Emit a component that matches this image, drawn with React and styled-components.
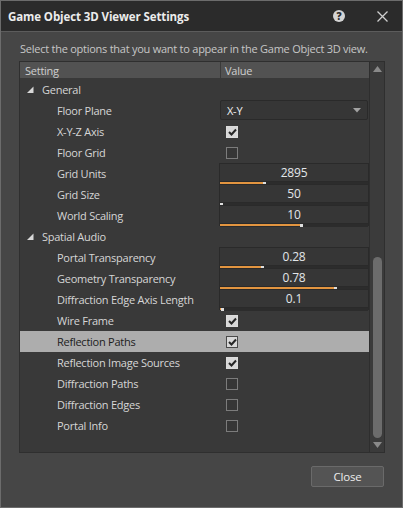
import React from "react";
import styled, { createGlobalStyle } from "styled-components";

const GlobalStyle = createGlobalStyle`
  html, body { margin: 0; padding: 0; background: #464646; }
  body { font-family: "Open Sans", "Noto Sans", sans-serif; }
  * { box-sizing: border-box; }
`;

const Window = styled.div`
  width: 403px;
  height: 508px;
  border: 1px solid #6c6c6c;
  background: #464646;
  display: flex;
  flex-direction: column;
`;

const TitleBar = styled.div`
  height: 31px;
  flex: none;
  background: #2b2b2b;
  border-bottom: 1px solid #5c5c5c;
  display: flex;
  align-items: center;
  padding: 0 0 0 7px;
`;

const Title = styled.div`
  flex: 1;
  color: #ececec;
  font-weight: 700;
  font-size: 11.5px;
  letter-spacing: -0.1px;
`;

const HelpIcon = styled.span`
  width: 12px;
  height: 12px;
  border-radius: 50%;
  background: #d4d4d4;
  color: #2b2b2b;
  font-size: 10px;
  font-weight: 800;
  line-height: 12px;
  text-align: center;
  margin-right: 32px;
`;

const CloseX = styled.svg`
  width: 11px;
  height: 11px;
  margin-right: 14px;
`;

const Body = styled.div`
  flex: 1;
  display: flex;
  flex-direction: column;
  padding: 9px 17px 0 18px;
`;

const Description = styled.div`
  color: #c6c6c6;
  font-size: 11px;
  letter-spacing: -0.25px;
  line-height: 16px;
  height: 20px;
  padding-left: 1px;
  white-space: nowrap;
`;

const Table = styled.div`
  width: 366px;
  height: 392px;
  border: 1px solid #2f2f2f;
  background: #393939;
  display: flex;
`;

const Content = styled.div`
  flex: 1;
  display: flex;
  flex-direction: column;
`;

const Header = styled.div`
  height: 16px;
  margin-bottom: 1px;
  background: #525252;
  color: #cfcfcf;
  font-size: 11px;
  letter-spacing: -0.25px;
  display: flex;
  align-items: center;
`;

const HeaderCell = styled.div`
  width: ${(p) => (p.$first ? "200px" : "auto")};
  flex: ${(p) => (p.$first ? "none" : 1)};
  padding-left: ${(p) => (p.$first ? 5 : 4)}px;
  border-left: ${(p) => (p.$first ? "none" : "1px solid #3a3a3a")};
  height: 100%;
  display: flex;
  align-items: center;
`;

const Row = styled.div`
  height: 21px;
  display: flex;
  background: ${(p) => (p.$selected ? "#adadad" : "transparent")};
  color: ${(p) => (p.$selected ? "#1c1c1c" : "#d6d6d6")};
  font-size: 11px;
  letter-spacing: -0.25px;
`;

const LabelCell = styled.div`
  width: 200px;
  flex: none;
  display: flex;
  align-items: center;
  gap: 8px;
  padding-left: ${(p) => (p.$group ? 6 : 37)}px;
  white-space: nowrap;
`;

const ValueCell = styled.div`
  flex: 1;
  display: flex;
  align-items: center;
  padding-left: ${(p) => p.$pad || 0}px;
`;

const Check = styled.div`
  width: 12px;
  height: 12px;
  border: 1px solid ${(p) => (p.$checked ? (p.$dark ? "#4a4a4a" : "#dcdcdc") : "#7c7c7c")};
  background: ${(p) => (p.$checked ? "#d8d8d8" : "#363636")};
  display: flex;
  align-items: center;
  justify-content: center;
`;

const Select = styled.div`
  flex: 1;
  height: 20px;
  margin-right: 1px;
  margin-top: -1px;
  border: 1px solid #2a2a2a;
  border-radius: 2px;
  background: #363636;
  color: #f0f0f0;
  display: flex;
  align-items: center;
  justify-content: space-between;
  padding: 0 6px 0 6px;
`;

const Slider = styled.div`
  flex: 1;
  height: 21px;
  margin-left: -1px;
  margin-top: -1px;
  border: 1px solid #2a2a2a;
  background: #363636;
  display: flex;
  flex-direction: column;
`;

const SliderValue = styled.div`
  flex: 1;
  display: flex;
  align-items: center;
  justify-content: center;
  color: #e2e6ea;
  font-size: 12px;
  letter-spacing: -0.2px;
`;

const Track = styled.div`
  height: 5px;
  background: #2c2c2c;
  border-top: 1px solid #2a2a2a;
  display: flex;
  align-items: center;
`;

const Fill = styled.div`
  height: 2px;
  background: #e39540;
`;

const Thumb = styled.div`
  width: 3px;
  height: 3px;
  background: #dedede;
`;

const ScrollBar = styled.div`
  width: 15px;
  flex: none;
  border-left: 1px solid #2e2e2e;
  background: #3b3b3b;
  display: flex;
  flex-direction: column;
  align-items: center;
  padding: 4px 0 4px 0;
`;

const ScrollThumb = styled.div`
  width: 9px;
  height: 181px;
  margin-top: auto;
  margin-bottom: 4px;
  border-radius: 5px;
  background: #6c6c6c;
`;

const Footer = styled.div`
  display: flex;
  justify-content: flex-end;
  padding-top: 13px;
  padding-right: 1px;
`;

const Button = styled.button`
  width: 73px;
  height: 21px;
  border: 1px solid #6a6a6a;
  border-radius: 2px;
  background: #545454;
  color: #ececec;
  font-family: "Open Sans", "Noto Sans", sans-serif;
  font-size: 11.5px;
  letter-spacing: -0.2px;
  padding: 0;
`;

const rows = [
  { group: true, label: "General" },
  { label: "Floor Plane", kind: "select", value: "X-Y" },
  { label: "X-Y-Z Axis", kind: "check", checked: true },
  { label: "Floor Grid", kind: "check", checked: false },
  { label: "Grid Units", kind: "slider", value: "2895", pct: 29 },
  { label: "Grid Size", kind: "slider", value: "50", pct: 0 },
  { label: "World Scaling", kind: "slider", value: "10", pct: 54 },
  { group: true, label: "Spatial Audio" },
  { label: "Portal Transparency", kind: "slider", value: "0.28", pct: 28 },
  { label: "Geometry Transparency", kind: "slider", value: "0.78", pct: 77 },
  { label: "Diffraction Edge Axis Length", kind: "slider", value: "0.1", pct: 0.7 },
  { label: "Wire Frame", kind: "check", checked: true },
  { label: "Reflection Paths", kind: "check", checked: true, selected: true },
  { label: "Reflection Image Sources", kind: "check", checked: true },
  { label: "Diffraction Paths", kind: "check", checked: false },
  { label: "Diffraction Edges", kind: "check", checked: false },
  { label: "Portal Info", kind: "check", checked: false },
];

const Tick = () => (
  <svg width="9" height="8" viewBox="0 0 9 8">
    <path d="M1 4 L3.5 6.5 L8 1.5" fill="none" stroke="#262626" strokeWidth="2" />
  </svg>
);

const Expander = () => (
  <svg width="8" height="8" viewBox="0 0 8 8">
    <polygon points="7.5,0.5 7.5,7 1,7" fill="#d8d8d8" />
  </svg>
);

function Value({ r }) {
  if (r.kind === "select")
    return (
      <ValueCell>
        <Select>
          <span>{r.value}</span>
          <svg width="8" height="5" viewBox="0 0 8 5">
            <polygon points="0,0 8,0 4,4.5" fill="#a2a2a2" />
          </svg>
        </Select>
      </ValueCell>
    );
  if (r.kind === "check")
    return (
      <ValueCell $pad={6}>
        <Check $checked={r.checked} $dark={r.selected}>
          {r.checked && <Tick />}
        </Check>
      </ValueCell>
    );
  if (r.kind === "slider")
    return (
      <ValueCell>
        <Slider>
          <SliderValue>{r.value}</SliderValue>
          <Track>
            <Fill style={{ width: `${r.pct}%` }} />
            <Thumb />
          </Track>
        </Slider>
      </ValueCell>
    );
  return <ValueCell />;
}

export default function App() {
  return (
    <>
      <GlobalStyle />
      <Window>
        <TitleBar>
          <Title>Game Object 3D Viewer Settings</Title>
          <HelpIcon>?</HelpIcon>
          <CloseX viewBox="0 0 11 11">
            <path d="M0.5 0.5 L10.5 10.5 M10.5 0.5 L0.5 10.5" stroke="#cfcfcf" strokeWidth="1.3" />
          </CloseX>
        </TitleBar>
        <Body>
          <Description>Select the options that you want to appear in the Game Object 3D view.</Description>
          <Table>
            <Content>
              <Header>
                <HeaderCell $first>Setting</HeaderCell>
                <HeaderCell>Value</HeaderCell>
              </Header>
              {rows.map((r, i) => (
                <Row key={i} $selected={r.selected}>
                  <LabelCell $group={r.group}>
                    {r.group && <Expander />}
                    {r.label}
                  </LabelCell>
                  <Value r={r} />
                </Row>
              ))}
            </Content>
            <ScrollBar>
              <svg width="9" height="6" viewBox="0 0 9 6">
                <polygon points="4.5,0 9,6 0,6" fill="#8a8a8a" />
              </svg>
              <ScrollThumb />
              <svg width="9" height="6" viewBox="0 0 9 6">
                <polygon points="0,0 9,0 4.5,6" fill="#8a8a8a" />
              </svg>
            </ScrollBar>
          </Table>
          <Footer>
            <Button>Close</Button>
          </Footer>
        </Body>
      </Window>
    </>
  );
}
